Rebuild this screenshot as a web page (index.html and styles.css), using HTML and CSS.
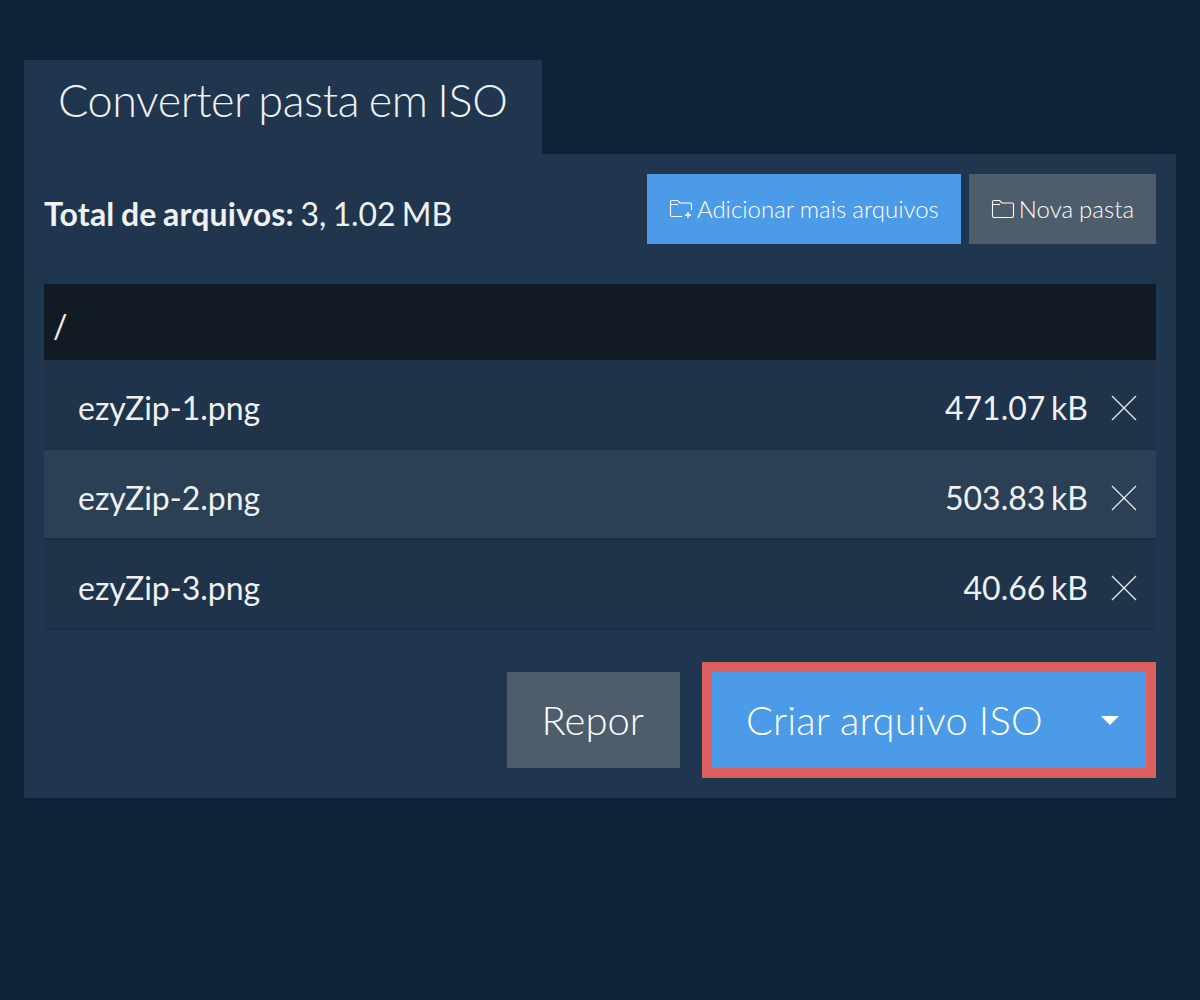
FILE: index.html
```html
<!DOCTYPE html>
<html lang="pt">
<head>
  <meta charset="UTF-8">
  <meta name="viewport" content="width=device-width, initial-scale=1.0">
  <title>Converter pasta em ISO</title>
  <link rel="stylesheet" href="styles.css">
</head>
<body>
  <div class="tab">Converter pasta em ISO</div>

  <div class="panel">
    <div class="toolbar">
      <div class="total"><b>Total de arquivos:</b> 3, 1.02 MB</div>
      <div class="toolbar-btns">
        <button type="button" class="btn btn-blue btn-small">
          <svg class="folder" width="24" height="20" viewBox="0 0 24 20" fill="none" stroke="currentColor" stroke-width="1.1">
            <path d="M13 17.5H3a1.5 1.5 0 0 1-1.5-1.5V3A1.5 1.5 0 0 1 3 1.5h5.5l2.5 2.5h10a1.5 1.5 0 0 1 1.5 1.5V11"/>
            <path d="M1.5 5.5H9"/>
            <path d="M19 13v6M16 16h6" stroke-width="1.4"/>
          </svg>
          <span class="btn-text">Adicionar mais arquivos</span>
        </button>
        <button type="button" class="btn btn-grey btn-small">
          <svg class="folder" width="24" height="20" viewBox="0 0 24 20" fill="none" stroke="currentColor" stroke-width="1.1">
            <path d="M3 18.5A1.5 1.5 0 0 1 1.5 17V3A1.5 1.5 0 0 1 3 1.5h5.5l2.5 2.5h10a1.5 1.5 0 0 1 1.5 1.5V17a1.5 1.5 0 0 1-1.5 1.5z"/>
            <path d="M1.5 5.5H9"/>
          </svg>
          <span class="btn-text">Nova pasta</span>
        </button>
      </div>
    </div>

    <div class="file-list">
      <div class="path">/</div>
      <div class="file-row">
        <span class="file-name">ezyZip-1.png</span>
        <span class="file-size">471.07 kB</span>
        <svg class="remove" width="26" height="26" viewBox="0 0 26 26" stroke="currentColor" stroke-width="1.3"><path d="M1 1l24 24M25 1L1 25"/></svg>
      </div>
      <div class="file-row active">
        <span class="file-name">ezyZip-2.png</span>
        <span class="file-size">503.83 kB</span>
        <svg class="remove" width="26" height="26" viewBox="0 0 26 26" stroke="currentColor" stroke-width="1.3"><path d="M1 1l24 24M25 1L1 25"/></svg>
      </div>
      <div class="file-row">
        <span class="file-name">ezyZip-3.png</span>
        <span class="file-size">40.66 kB</span>
        <svg class="remove" width="26" height="26" viewBox="0 0 26 26" stroke="currentColor" stroke-width="1.3"><path d="M1 1l24 24M25 1L1 25"/></svg>
      </div>
    </div>

    <div class="actions">
      <button type="button" class="btn btn-grey btn-large">Repor</button>
      <div class="highlight">
        <button type="button" class="btn btn-blue btn-large btn-create">
          Criar arquivo ISO
          <span class="caret"></span>
        </button>
      </div>
    </div>
  </div>
</body>
</html>
```

FILE: styles.css
```css
body {
  margin: 0;
  padding: 60px 24px 0;
  min-height: 100vh;
  box-sizing: border-box;
  background: #0f2438;
  font-family: Lato, "Open Sans", sans-serif;
  color: #f0f1f2;
}

.tab {
  width: 518px;
  height: 94px;
  box-sizing: border-box;
  padding: 12px 0 0 34px;
  background: #20364e;
  font-size: 45px;
  font-weight: 300;
  line-height: 56px;
  letter-spacing: -0.45px;
  word-spacing: -2px;
}

.panel {
  height: 644px;
  box-sizing: border-box;
  padding: 20px;
  background: #20364e;
}

.toolbar {
  display: flex;
  justify-content: space-between;
  align-items: center;
  height: 70px;
}

.total {
  font-size: 32px;
  padding-top: 8px;
  letter-spacing: -0.15px;
  word-spacing: -1.5px;
}

.total b {
  letter-spacing: 0.2px;
}

.toolbar-btns {
  display: flex;
  gap: 8px;
}

.btn {
  border: none;
  color: #fff;
  font-family: inherit;
  cursor: pointer;
}

.btn-blue {
  background: #4c9be8;
}

.btn-grey {
  background: #4e5d6c;
}

.btn-small {
  display: flex;
  align-items: center;
  gap: 4px;
  height: 70px;
  padding: 0 22px;
  font-size: 24px;
  font-weight: 300;
  word-spacing: -0.5px;
}

.btn-text {
  margin-top: -2px;
}

.folder {
  flex: none;
}

.file-list {
  margin-top: 40px;
}

.path {
  height: 76px;
  box-sizing: border-box;
  padding: 20px 9px 0;
  background: #121b24;
  font-size: 32px;
  line-height: 44px;
}

.file-row {
  display: flex;
  align-items: center;
  height: 90px;
  box-sizing: border-box;
  padding: 0 19px 0 34px;
  border-bottom: 2px solid #1b2f44;
  background: #1f344b;
  font-size: 32px;
}

.file-row.active {
  background: #2b3f55;
}

.file-name {
  flex: 1;
  padding-top: 6px;
}

.file-size {
  padding-top: 6px;
  margin-right: -1px;
  word-spacing: -2.5px;
}

.remove {
  margin-left: 24px;
  color: #e8eaec;
  margin-top: 8px;
}

.actions {
  display: flex;
  justify-content: flex-end;
  align-items: center;
  gap: 22px;
  margin-top: 32px;
}

.btn-large {
  height: 96px;
  padding: 0 36px 0 35px;
  font-size: 40px;
  font-weight: 300;
}

.highlight {
  display: flex;
  padding: 10px;
  background: #dc5f5f;
}

.btn-create {
  display: flex;
  align-items: center;
  width: 434px;
  box-sizing: border-box;
  padding-left: 34px;
  letter-spacing: 0.1px;
}

.caret {
  margin-left: auto;
  margin-right: -9px;
  border-top: 9px solid #fff;
  border-left: 9px solid transparent;
  border-right: 9px solid transparent;
}
```
